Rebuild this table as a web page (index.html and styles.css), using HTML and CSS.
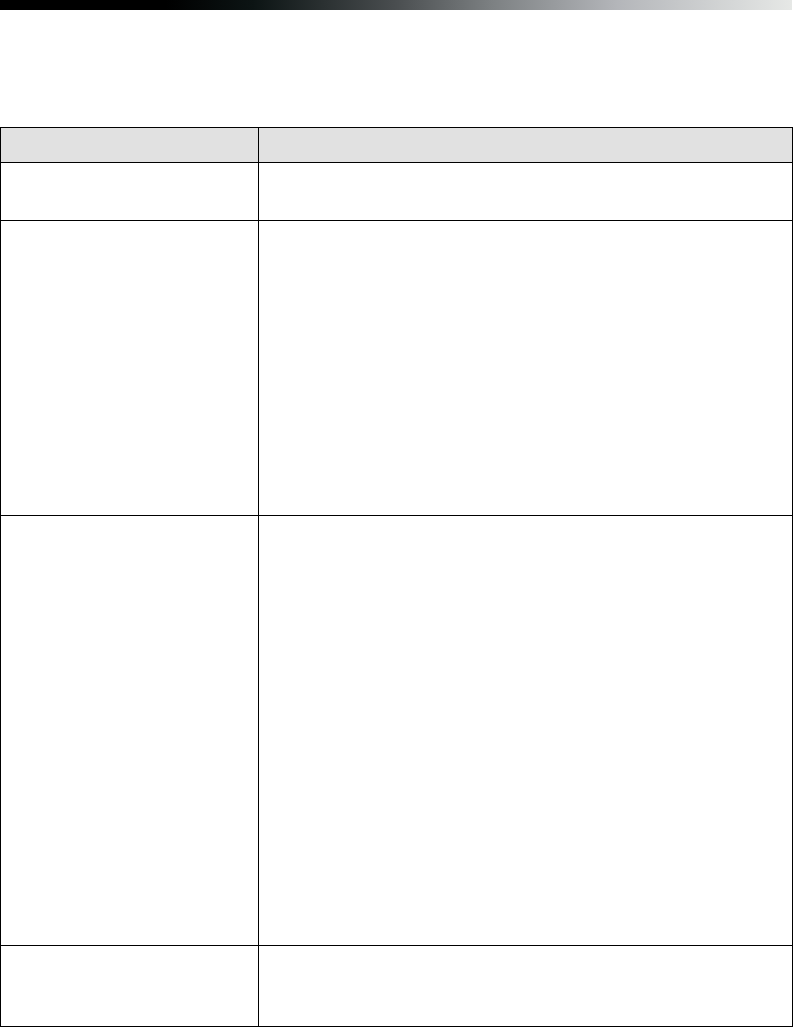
FILE: index.html
```html
<!DOCTYPE html>
<html lang="en">
<head>
    <meta charset="UTF-8">
    <meta name="viewport" content="width=device-width, initial-scale=1.0">
    <title>Table</title>
    <link rel="stylesheet" href="styles.css">
</head>
<body>
    <div class="top-bar"></div>

    <table class="grid">
        <tr class="row-head">
            <th class="col-a"></th>
            <th></th>
        </tr>
        <tr class="row-1">
            <td></td>
            <td></td>
        </tr>
        <tr class="row-2">
            <td></td>
            <td></td>
        </tr>
        <tr class="row-3">
            <td></td>
            <td></td>
        </tr>
        <tr class="row-4">
            <td></td>
            <td></td>
        </tr>
    </table>
</body>
</html>
```

FILE: styles.css
```css
body { margin: 0; font-family: "Liberation Sans", Arial, sans-serif; background: #fff; }
.top-bar { width: 792px; height: 10px; background: linear-gradient(to right, #000 0%, #000 21%, #0c1414 32%, #4a4e50 50%, #7c8082 62%, #b4b6ba 78%, #e6e8e6 100%); }
.grid { margin-top: 117px; width: 793px; border-collapse: collapse; table-layout: fixed; }
.grid th, .grid td { border: 1px solid #000; padding: 0; }
.grid th { background: #e1e1e1; }
.col-a { width: 257px; }
.row-head { height: 35px; }
.row-1 { height: 58px; }
.row-2 { height: 295px; }
.row-3 { height: 430px; }
.row-4 { height: 81px; }
```
